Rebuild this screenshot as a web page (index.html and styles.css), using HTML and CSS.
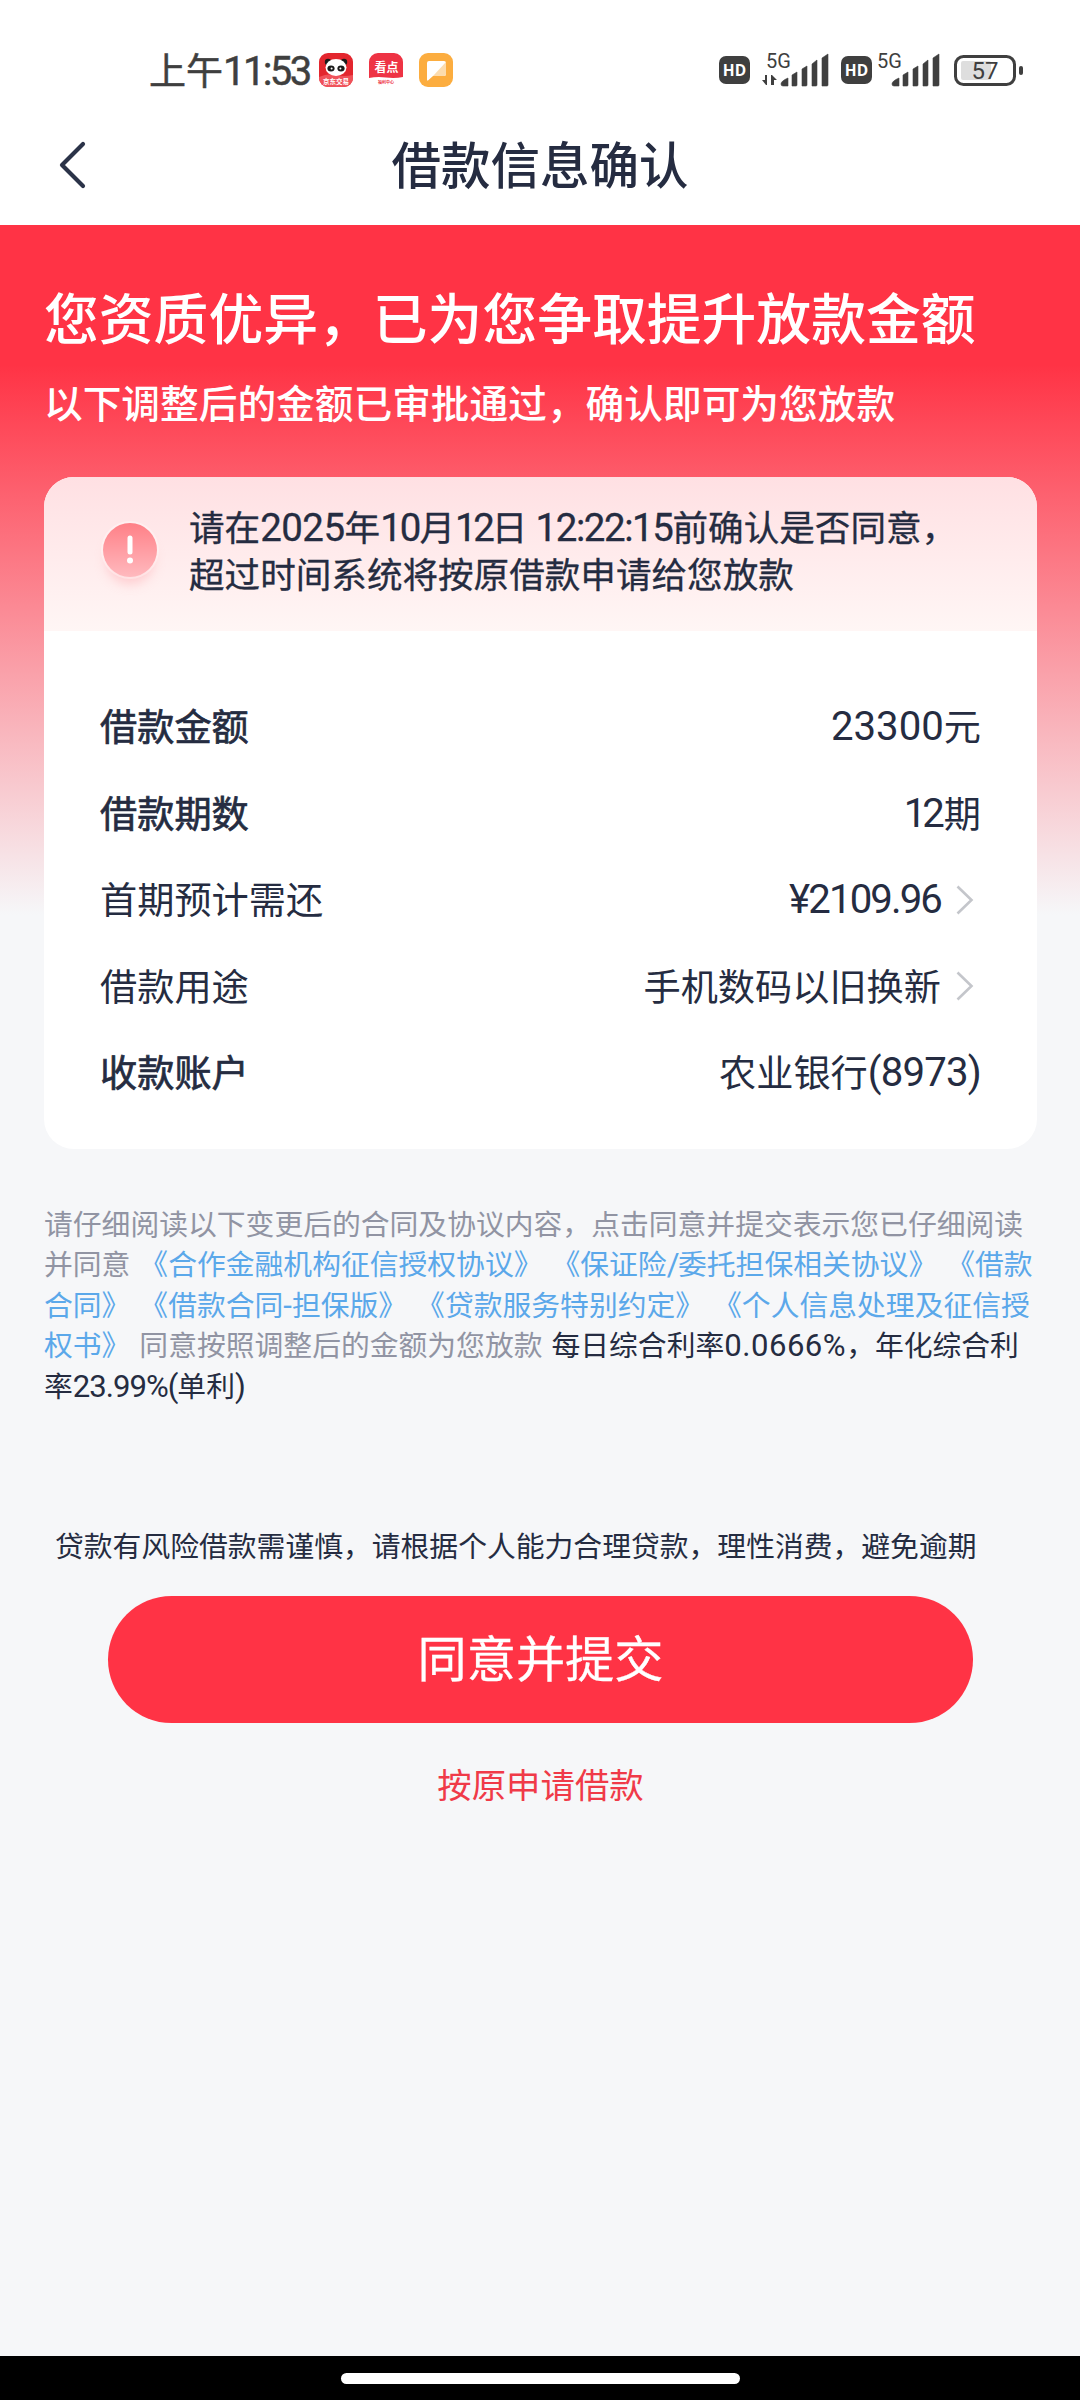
FILE: index.html
```html
<!DOCTYPE html>
<html lang="zh-CN">
<head>
<meta charset="utf-8">
<title>借款信息确认</title>
<link rel="stylesheet" href="styles.css">
</head>
<body>
<div class="screen">
  <header class="top">
    <div class="status">
      <div class="clock">上午<span class="clock-num">11:53</span></div>
      <div class="apps">
        <svg width="34" height="34" viewBox="0 0 34 34">
          <rect width="34" height="34" rx="9" fill="#e3262e"/>
          <path d="M0 24Q9 20 17 22T34 22V25a9 9 0 0 1-9 9H9a9 9 0 0 1-9-9Z" fill="#f0525a"/>
          <circle cx="9" cy="9" r="3.2" fill="#1a1a1a"/><circle cx="25" cy="9" r="3.2" fill="#1a1a1a"/>
          <ellipse cx="17" cy="14.500" rx="10.500" ry="8.500" fill="#fff"/>
          <ellipse cx="12" cy="15.500" rx="3.600" ry="3" fill="#1a1a1a"/><ellipse cx="22" cy="15.500" rx="3.600" ry="3" fill="#1a1a1a"/>
          <circle cx="12.600" cy="15.500" r="1" fill="#fff"/><circle cx="21.400" cy="15.500" r="1" fill="#fff"/>
          <text x="17" y="31" class="app-text app-text-s">京东交易</text>
        </svg>
        <svg width="34" height="34" viewBox="0 0 34 34">
          <path d="M9 0H25a9 9 0 0 1 9 9V24Q26 25.500 17 24.500T0 25V9a9 9 0 0 1 9-9Z" fill="#ee3344"/>
          <text x="17.500" y="19" class="app-text app-text-l">看点</text>
          <text x="17" y="31" class="app-text app-text-xs">福利中心</text>
        </svg>
        <svg width="34" height="34" viewBox="0 0 34 34">
          <rect width="34" height="34" rx="9" fill="#fcad3f"/>
          <path d="M8 10q0-2 2-2H25q2 0 2 2V21q0 2-2 2H14L9 27.500q-1 .5-1-1Z" fill="#fff"/>
          <path d="M27 9V21q0 2-2 2H14Z" fill="#fcdcae"/>
        </svg>
      </div>
      <div class="signals">
        <svg width="31" height="28" viewBox="0 0 31 28"><rect width="31" height="28" rx="7" fill="#3f3f3f"/><text x="15.500" y="20" class="hd">HD</text></svg>
        <svg class="net net-a" width="67" height="34" viewBox="0 0 67 34">
          <text x="4" y="15" class="g5">5G</text>
          <path d="M5 22V32H4L0 27H3V22ZM9 32V22h1l5 5H12V32Z" fill="#3f3f3f"/>
          <path id="bars" d="M19 31q0-3 7-6V33H21q-2 0-2-2ZM30 22l5-3V32q0 1-1 1H30ZM40 16l5-3V32q0 1-1 1H40ZM50 11l5-4V32q0 1-1 1H50ZM60 5l6-4V32q0 1-1 1H60Z" fill="#3f3f3f" stroke="#3f3f3f" stroke-width=".6"/>
        </svg>
        <svg width="31" height="28" viewBox="0 0 31 28"><rect width="31" height="28" rx="7" fill="#3f3f3f"/><text x="15.500" y="20" class="hd">HD</text></svg>
        <svg class="net net-b" width="67" height="34" viewBox="0 0 67 34">
          <text x="4" y="15" class="g5">5G</text>
          <use href="#bars"/>
        </svg>
        <svg class="battery" width="69" height="31" viewBox="0 0 69 31">
          <rect x="7" y="6" width="30" height="19" rx="2" fill="#dedede"/>
          <rect x="1.500" y="1.500" width="59" height="28" rx="8" fill="none" stroke="#3f3f3f" stroke-width="3"/>
          <rect x="65" y="11" width="4" height="9" rx="2" fill="#3f3f3f"/>
          <text x="31" y="24" class="pct">57</text>
        </svg>
      </div>
    </div>
    <div class="titlebar">
      <svg class="back" width="28" height="48" viewBox="0 0 28 48"><path d="M25 3 4 24 25 45" fill="none" stroke="#2b3348" stroke-width="4.200" stroke-linecap="round" stroke-linejoin="round"/></svg>
      <h1>借款信息确认</h1>
    </div>
  </header>

  <main class="page">
    <h2 class="headline">您资质优异，已为您争取提升放款金额</h2>
    <p class="subline">以下调整后的金额已审批通过，确认即可为您放款</p>

    <section class="card">
      <div class="notice">
        <svg class="alert" width="80" height="90" viewBox="0 0 80 90">
          <defs>
            <linearGradient id="ag" x1="0" y1="0" x2="0" y2="1"><stop offset="0" stop-color="#ff8087"/><stop offset="1" stop-color="#ffb9be"/></linearGradient>
            <filter id="soft" x="-50%" y="-50%" width="200%" height="200%"><feGaussianBlur stdDeviation="6"/></filter>
          </defs>
          <circle cx="40" cy="50" r="24" fill="#ffb5ba" opacity=".6" filter="url(#soft)"/>
          <circle cx="40" cy="40" r="29" fill="#fff" opacity=".35"/>
          <circle cx="40" cy="40" r="27" fill="url(#ag)"/>
          <path d="M40 28V42" stroke="#fff" stroke-width="5" stroke-linecap="round"/><circle cx="40" cy="50.500" r="3" fill="#fff"/>
        </svg>
        <p class="notice-text">请在<i class="n year">2025</i>年<i class="n month">10</i>月<i class="n day">12</i>日<i class="n time"> 12:22:15</i>前确认是否同意，<br>超过时间系统将按原借款申请给您放款</p>
      </div>
      <dl class="rows">
        <div class="row"><dt class="m">借款金额</dt><dd><i class="n">23300</i>元</dd></div>
        <div class="row"><dt class="m">借款期数</dt><dd><i class="n periods">12</i>期</dd></div>
        <div class="row"><dt>首期预计需还</dt><dd><i class="n yen">¥2109.96</i><svg class="chev" width="18" height="30" viewBox="0 0 18 30"><path d="M1.500 1.500 15.500 15 1.500 28.500" fill="none" stroke="#c4c6cb" stroke-width="2.600"/></svg></dd></div>
        <div class="row"><dt>借款用途</dt><dd>手机数码以旧换新<svg class="chev" width="18" height="30" viewBox="0 0 18 30"><path d="M1.500 1.500 15.500 15 1.500 28.500" fill="none" stroke="#c4c6cb" stroke-width="2.600"/></svg></dd></div>
        <div class="row"><dt class="m">收款账户</dt><dd>农业银行<i class="n account">(8973)</i></dd></div>
      </dl>
    </section>

    <p class="terms">请仔细阅读以下变更后的合同及协议内容，点击同意并提交表示您已仔细阅读<br>并同意 <a>《合作金融机构征信授权协议》</a> <a>《保证险<i class="n slash">/</i>委托担保相关协议》</a> <a>《借款<br>合同》</a> <a>《借款合同<i class="n">-</i>担保版》</a> <a>《贷款服务特别约定》</a> <a>《个人信息处理及征信授<br>权书》</a> 同意按照调整后的金额为您放款 <b>每日综合利率<i class="n rate">0.0666%</i>，年化综合利<br>率<i class="n annual">23.99%(</i>单利<i class="n">)</i></b></p>

    <p class="risk">贷款有风险借款需谨慎，请根据个人能力合理贷款，理性消费，避免逾期</p>
    <button class="submit">同意并提交</button>
    <a class="original">按原申请借款</a>
  </main>

  <footer class="navbar"><div class="pill"></div></footer>
</div>
</body>
</html>
```
FILE: styles.css
```css
* { box-sizing: border-box; margin: 0; padding: 0; }
body {
  width: 1080px;
  background: #f6f7f9;
  color: #252c41;
  font-family: "Noto Sans CJK SC", sans-serif;
  font-weight: 400;
  text-spacing-trim: space-all;
}
svg { display: block; flex: none; overflow: visible; }
i { font-style: normal; }
.n { font-family: Roboto, sans-serif; font-size: 1.08em; line-height: 1; }

.screen { display: flex; flex-direction: column; height: 2400px; }

/* status bar */
.top { height: 225px; background: #fff; flex: none; }
.status { display: flex; align-items: center; height: 106px; padding: 34px 57px 0 149px; color: #3f3f3f; }
.clock { width: 170px; font-size: 37px; line-height: 44px; white-space: nowrap; -webkit-text-stroke: .5px; }
.clock-num { font-family: Roboto, sans-serif; font-size: 40px; letter-spacing: -2.6px; }
.apps { display: flex; gap: 16px; }
.app-text { text-anchor: middle; fill: #fff; font-weight: 700; }
.app-text-l { font-size: 12px; }
.app-text-s { font-size: 6.5px; }
.app-text-xs { font-size: 4px; fill: #ee3344; }
.signals { display: flex; align-items: center; margin-left: auto; }
.hd { font: 700 15.5px "Open Sans", sans-serif; fill: #fff; text-anchor: middle; }
.g5 { font: 400 20px Roboto, sans-serif; fill: #3f3f3f; }
.pct { font: 400 24px Roboto, sans-serif; fill: #3f3f3f; text-anchor: middle; }
.net-a { margin: 0 12px; }
.net-b { margin: 0 14px 0 1px; }

.titlebar { display: grid; grid-template-columns: 60px 1fr 60px; align-items: center; height: 117px; padding: 0 58px; }
.titlebar h1 { padding-bottom: 3px; font-size: 49.5px; line-height: 72px; font-weight: 500; text-align: center; }

/* page */
.page {
  flex: 1;
  display: flex;
  flex-direction: column;
  padding: 52px 43px 0 44px;
  background: linear-gradient(#ff3345 0, #ff3345 140px, #f6f7f9 690px);
}
.headline { font-size: 54.8px; line-height: 76px; font-weight: 500; color: #fff; white-space: nowrap; }
.subline { margin-top: 21px; font-size: 38.7px; line-height: 54px; font-weight: 500; color: #fff; white-space: nowrap; }
.card { flex: none; margin-top: 49px; height: 672px; border-radius: 30px; background: #fff; overflow: hidden; }
.notice { display: flex; height: 154px; padding: 25px 0 0 46px; background: linear-gradient(#ffe0e3, #fff6f5); }
.alert { margin: 8px 19px 0 0; }
.notice-text { font-size: 35.6px; line-height: 47px; white-space: nowrap; -webkit-text-stroke: .3px; }
.year { letter-spacing: -.5px; }
.month { letter-spacing: -2px; }
.day { letter-spacing: -3.2px; }
.time { letter-spacing: -1.4px; }
.rows { padding: 51px 56px 0 56px; }
.row { display: flex; justify-content: space-between; align-items: center; height: 86.5px; font-size: 37.2px; line-height: 54px; }
.row dt.m { -webkit-text-stroke: .7px; }
.row dd { display: flex; align-items: center; }
.row .n { padding-top: 4px; }
.periods { letter-spacing: -4px; padding-right: 3px; }
.yen { letter-spacing: -1.9px; }
.account { letter-spacing: -.8px; }
.chev { margin: 3px 7px 0 15px; }

.terms { margin-top: 54px; font-size: 28.8px; line-height: 40.4px; color: #9194a3; white-space: nowrap; word-spacing: 2.5px; }
.terms a { color: #5ba8ea; }
.terms b { font-weight: 400; color: #252c41; }
.slash { letter-spacing: -1.5px; }
.rate { letter-spacing: .5px; }
.annual { letter-spacing: -1px; }
.risk { margin: 120px 0 0 11px; font-size: 28.8px; line-height: 40px; white-space: nowrap; }
.submit { align-self: center; width: 865px; height: 127px; margin-top: 31px; padding-bottom: 7px; border: 0; border-radius: 64px; background: #ff3345; color: #fff; font: 400 49.2px/72px "Noto Sans CJK SC", sans-serif; -webkit-text-stroke: .3px; }
.original { align-self: center; margin-top: 35px; font-size: 34.4px; line-height: 50px; color: #f03a48; }

.navbar { flex: none; display: flex; justify-content: center; height: 44px; padding-top: 17px; background: #000; }
.pill { width: 399px; height: 11px; border-radius: 6px; background: #fff; }
```
